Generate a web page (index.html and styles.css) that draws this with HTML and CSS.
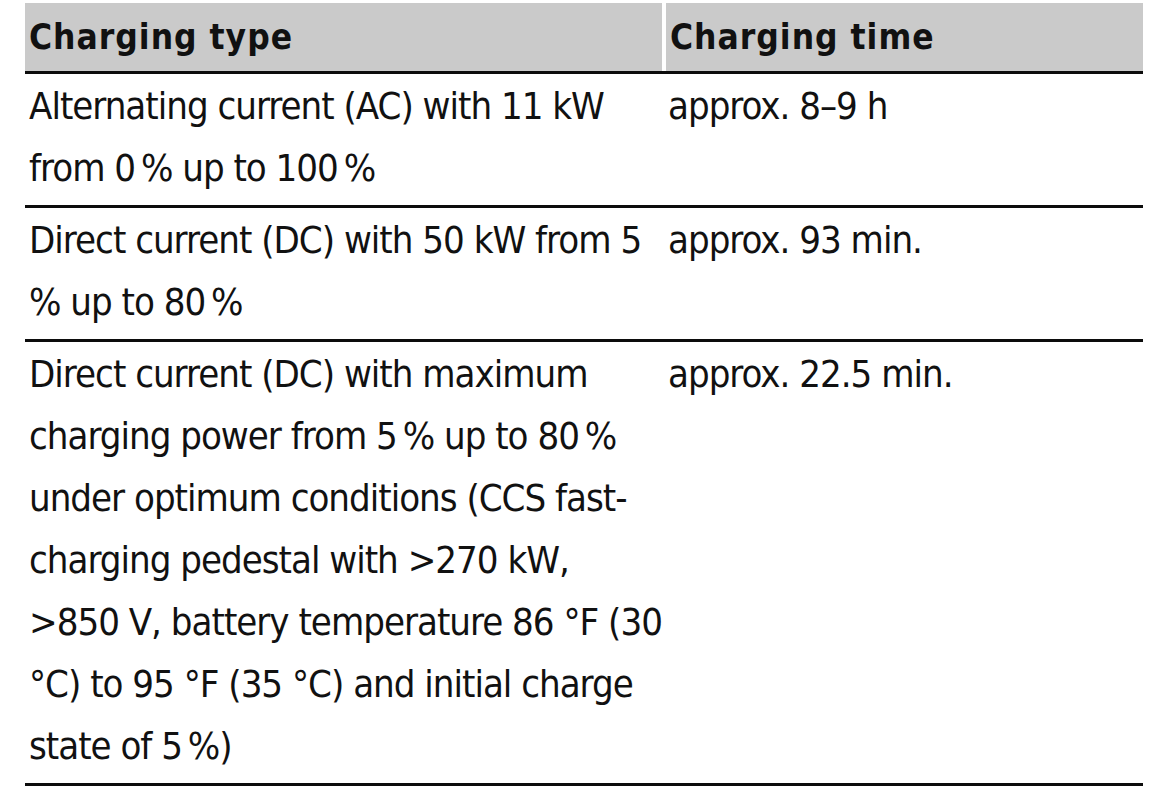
FILE: index.html
```html
<!DOCTYPE html>
<html>
<head>
<meta charset="utf-8">
<link rel="stylesheet" href="styles.css">
</head>
<body>
<div class="table">
  <div class="head">
    <div class="hcell c1">Charging type</div>
    <div class="hcell c2">Charging time</div>
  </div>
  <div class="row">
    <div class="cell c1">Alternating current (AC) with 11 kW<br>from 0&#8239;% up to 100&#8239;%</div>
    <div class="cell c2">approx. 8–9 h</div>
  </div>
  <div class="row">
    <div class="cell c1">Direct current (DC) with 50 kW from 5<br>% up to 80&#8239;%</div>
    <div class="cell c2">approx. 93 min.</div>
  </div>
  <div class="row">
    <div class="cell c1">Direct current (DC) with maximum<br>charging power from 5&#8239;% up to 80&#8239;%<br>under optimum conditions (CCS fast-<br>charging pedestal with &gt;270 kW,<br>&gt;850 V, battery temperature 86 °F (30<br>°C) to 95 °F (35 °C) and initial charge<br>state of 5&#8239;%)</div>
    <div class="cell c2">approx. 22.5 min.</div>
  </div>
</div>
</body>
</html>
```
FILE: styles.css
```css
html, body {
  margin: 0;
  padding: 0;
  background: #ffffff;
}
body {
  padding: 3px 0 0 25px;
  font-family: "DejaVu Sans Condensed", "Roboto", sans-serif;
  color: #111111;
}
.table {
  width: 1118px;
}
.head {
  display: grid;
  grid-template-columns: 637px 477px;
  column-gap: 4px;
  border-bottom: 3px solid #0c0c0c;
}
.hcell {
  background: #cacaca;
  height: 68px;
  line-height: 68px;
  font-size: 35px;
  font-weight: bold;
  letter-spacing: 1px;
  padding-left: 4px;
  white-space: nowrap;
}
.row {
  display: grid;
  grid-template-columns: 641px 477px;
  border-bottom: 3px solid #0c0c0c;
  padding: 1px 0 6px;
}
.cell {
  font-size: 38px;
  line-height: 62px;
  letter-spacing: -1px;
  padding-left: 4px;
  white-space: nowrap;
}
.cell.c2 {
  padding-left: 2px;
}
```
